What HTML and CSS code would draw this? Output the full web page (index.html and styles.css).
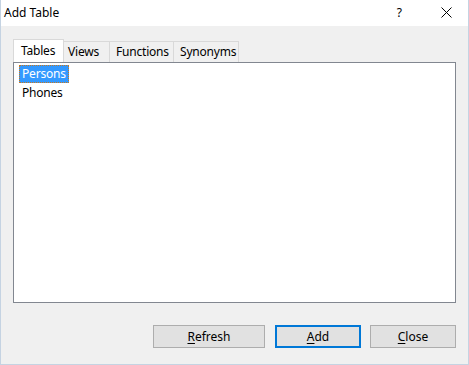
FILE: index.html
```html
<!DOCTYPE html>
<html>
<head>
  <title>Add Table</title>
  <link rel="stylesheet" href="styles.css">
</head>
<body>
  <div class="window">
    <div class="titlebar">
      <span class="title">Add Table</span>
      <span class="help">?</span>
      <span class="close-box">
        <svg width="11" height="11" viewBox="0 0 11 11">
          <path d="M0.5 0.5 L10.5 10.5 M10.5 0.5 L0.5 10.5" stroke="#000" stroke-width="1" fill="none"/>
        </svg>
      </span>
    </div>

    <div class="content">
      <div class="tabs">
        <div class="tab selected tab-tables">Tables</div>
        <div class="tab tab-views">Views</div>
        <div class="tab tab-functions">Functions</div>
        <div class="tab tab-synonyms">Synonyms</div>
      </div>

      <div class="listbox">
        <div class="item"><span class="item-text active">Persons</span></div>
        <div class="item"><span class="item-text">Phones</span></div>
      </div>

      <div class="buttons">
        <button class="btn btn-wide"><u>R</u>efresh</button>
        <button class="btn btn-default"><u>A</u>dd</button>
        <button class="btn"><u>C</u>lose</button>
      </div>
    </div>
  </div>
</body>
</html>
```

FILE: styles.css
```css
body {
  margin: 0;
  font-family: "Noto Sans", "Open Sans", sans-serif;
  font-size: 12px;
  color: #000;
}
.window {
  width: 469px;
  height: 365px;
  box-sizing: border-box;
  border: 1px solid #c5d3e2;
  border-top: none;
  display: flex;
  flex-direction: column;
  background-color: #f0f0f0;
}
.titlebar {
  height: 26px;
  background-color: #fff;
  display: flex;
  align-items: center;
  padding-left: 3px;
}
.title {
  flex: 1;
  margin-top: -1px;
}
.help {
  margin-right: 39px;
  margin-top: -1px;
}
.close-box {
  display: flex;
  margin-right: 16px;
  margin-top: -1px;
}
.content {
  flex: 1;
  padding: 13px 12px 16px 12px;
  display: flex;
  flex-direction: column;
}
.tabs {
  height: 23px;
  display: flex;
  align-items: flex-end;
  letter-spacing: -0.2px;
}
.tab {
  height: 21px;
  box-sizing: border-box;
  border: 1px solid #d9d9d9;
  border-bottom: none;
  border-left: none;
  background-color: #f0f0f0;
  padding-left: 4px;
  line-height: 19px;
}
.tab.selected {
  height: 23px;
  border-left: 1px solid #d9d9d9;
  background-color: #fff;
  padding-left: 7px;
  line-height: 22px;
}
.tab-tables {
  width: 51px;
}
.tab-views {
  width: 46px;
}
.tab-functions {
  width: 64px;
  padding-left: 6px;
}
.tab-synonyms {
  width: 65px;
  padding-left: 6px !important;
}
.listbox {
  height: 241px;
  box-sizing: border-box;
  border: 1px solid #828790;
  background-color: #fff;
  padding-top: 1px;
  letter-spacing: -0.2px;
}
.item {
  height: 19px;
  line-height: 19px;
  padding-left: 5px;
}
.item-text {
  display: inline-block;
  padding: 0 2px;
  border: 1px solid transparent;
  line-height: 16px;
}
.item-text.active {
  background-color: #3399ff;
  color: #fff;
  border: 1px dotted #c8781e;
}
.buttons {
  margin-top: 22px;
  display: flex;
  justify-content: flex-end;
  gap: 9px;
}
.btn {
  width: 86px;
  height: 23px;
  box-sizing: border-box;
  border: 1px solid #adadad;
  background-color: #e1e1e1;
  font-family: "Noto Sans", "Open Sans", sans-serif;
  font-size: 12px;
  color: #000;
  padding: 0;
}
.btn-wide {
  width: 112px;
  margin-right: 1px;
}
.btn-default {
  border: 2px solid #0078d7;
}
.btn u {
  text-decoration-thickness: 1px;
  text-underline-offset: 2px;
}
```
